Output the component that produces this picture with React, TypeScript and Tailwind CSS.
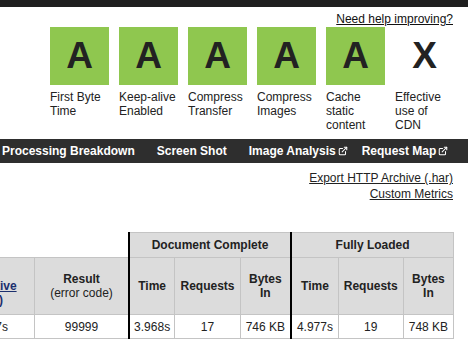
import { ExternalLink } from 'lucide-react';

// Grade tiles shown across the top of the result summary
const GRADES = [
  { grade: 'A', label: 'First Byte Time' },
  { grade: 'A', label: 'Keep-alive Enabled' },
  { grade: 'A', label: 'Compress Transfer' },
  { grade: 'A', label: 'Compress Images' },
  { grade: 'A', label: 'Cache static content' },
  { grade: 'X', label: 'Effective use of CDN' },
];

const TABS = [
  { name: 'Processing Breakdown', external: false },
  { name: 'Screen Shot', external: false },
  { name: 'Image Analysis', external: true },
  { name: 'Request Map', external: true },
];

const head = 'bg-[#dcdcdc] border border-[#c4c4c4] font-bold text-[#222] text-center';
const cell = 'border border-[#c4c4c4] text-center text-[#222] h-[24px]';
const thick = 'border-l-2 border-l-black';

export default function App() {
  return (
    <div
      className="w-[468px] h-[352px] overflow-hidden bg-white text-[12px] leading-[14px] text-[#222]"
      style={{ fontFamily: '"Liberation Sans", Arial, sans-serif' }}
    >
      {/* top bar */}
      <div className="h-[7px] bg-[#1f1f1f]" />

      <div className="flex justify-end pr-[15px] pt-[5px] h-[20px]">
        <a className="underline text-[#111]">Need help improving?</a>
      </div>

      {/* grades */}
      <div className="flex gap-[10px] pl-[50px]">
        {GRADES.map((g, i) => (
          <div key={i} className="w-[59px] flex flex-col">
            <div
              className={`h-[58px] flex items-center justify-center text-[37px] font-bold text-[#222] ${
                g.grade === 'X' ? '' : 'bg-[#8fc74f]'
              }`}
            >
              {g.grade}
            </div>
            <div className="mt-[5px] leading-[14px]">{g.label}</div>
          </div>
        ))}
      </div>

      {/* nav */}
      <div className="mt-[7px] h-[24px] bg-[#2e2e2e] flex items-center gap-[22px] pl-[2px] text-white font-bold text-[12px] whitespace-nowrap">
        {TABS.map((t) => (
          <span
            key={t.name}
            className={`flex shrink-0 items-center gap-[2px] ${t.external ? 'mr-[-8px]' : ''}`}
          >
            {t.name}
            {t.external && <ExternalLink size={10} strokeWidth={2.5} />}
          </span>
        ))}
      </div>

      <div className="flex flex-col items-end pr-[15px] pt-[7px] leading-[16px]">
        <a className="underline">Export HTTP Archive (.har)</a>
        <a className="underline">Custom Metrics</a>
      </div>

      {/* results table */}
      <div className="mt-[30px]">
        <table className="table-fixed border-collapse ml-[-62px]" style={{ width: 516 }}>
          <colgroup>
            <col style={{ width: 96 }} />
            <col style={{ width: 94 }} />
            <col style={{ width: 46 }} />
            <col style={{ width: 65 }} />
            <col style={{ width: 51 }} />
            <col style={{ width: 47 }} />
            <col style={{ width: 65 }} />
            <col style={{ width: 50 }} />
          </colgroup>
          <thead>
            <tr className="h-[25px]">
              <th colSpan={2} />
              <th colSpan={3} className={`${head} ${thick}`}>Document Complete</th>
              <th colSpan={3} className={`${head} ${thick}`}>Fully Loaded</th>
            </tr>
            <tr className="h-[57px]">
              <th className={head}>
                <a className="underline text-[#1b2f6e]">
                  First
                  <br />
                  Interactive
                </a>
                <br />
                <span className="text-[#1b2f6e]">(beta)</span>
              </th>
              <th className={head}>
                Result
                <br />
                <span className="font-normal">(error code)</span>
              </th>
              <th className={`${head} ${thick}`}>Time</th>
              <th className={head}>Requests</th>
              <th className={head}>
                Bytes
                <br />
                In
              </th>
              <th className={`${head} ${thick}`}>Time</th>
              <th className={head}>Requests</th>
              <th className={head}>
                Bytes
                <br />
                In
              </th>
            </tr>
          </thead>
          <tbody>
            <tr>
              <td className={cell}>14.777s</td>
              <td className={cell}>99999</td>
              <td className={`${cell} ${thick}`}>3.968s</td>
              <td className={cell}>17</td>
              <td className={cell}>746 KB</td>
              <td className={`${cell} ${thick}`}>4.977s</td>
              <td className={cell}>19</td>
              <td className={cell}>748 KB</td>
            </tr>
          </tbody>
        </table>
      </div>
    </div>
  );
}
